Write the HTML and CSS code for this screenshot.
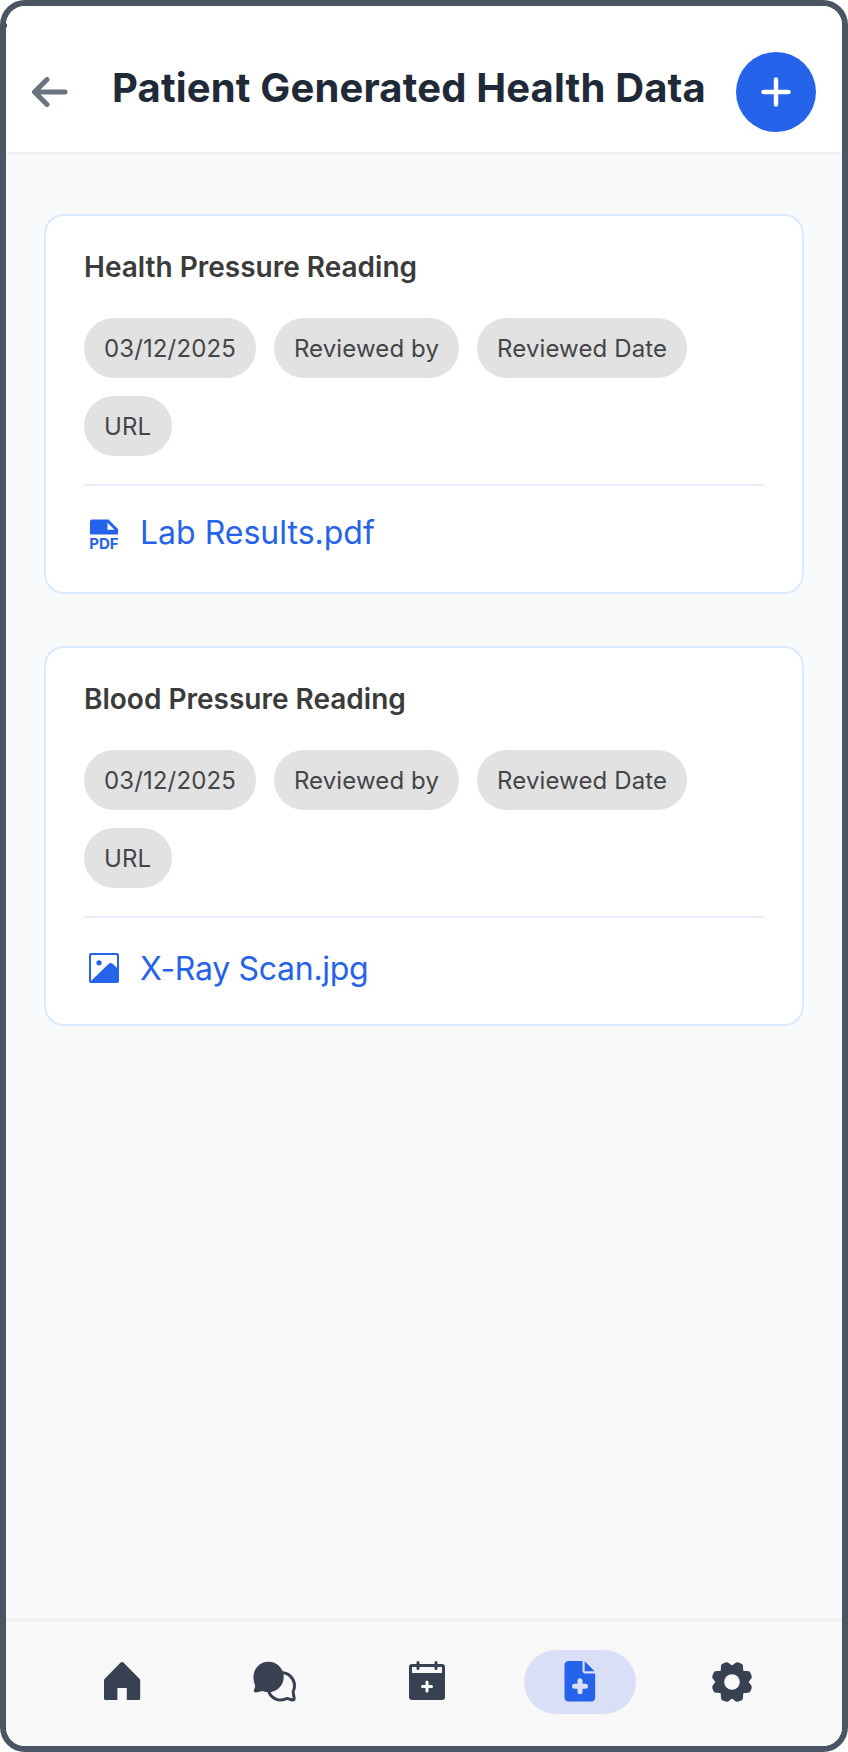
FILE: index.html
```html
<!DOCTYPE html>
<html lang="en">
<head>
    <meta charset="UTF-8">
    <meta name="viewport" content="width=device-width, initial-scale=1.0">
    <title>Patient Generated Health Data</title>
    <link rel="stylesheet" href="styles.css">
</head>
<body>
    <div class="phone">
        <header class="header">
            <button class="back-btn" aria-label="Back">
                <svg width="36" height="30" viewBox="0 0 36 30">
                    <path d="M33 15H3M15 2.5L2.5 15L15 27.5" />
                </svg>
            </button>
            <h1 class="page-title">Patient Generated Health Data</h1>
            <button class="add-btn" aria-label="Add">
                <svg width="30" height="30" viewBox="0 0 30 30">
                    <path d="M15 2.5V27.5M2.5 15H27.5" />
                </svg>
            </button>
        </header>

        <main class="content">
            <section class="card">
                <h2 class="card-title">Health Pressure Reading</h2>
                <div class="tags">
                    <span class="tag">03/12/2025</span>
                    <span class="tag">Reviewed by</span>
                    <span class="tag">Reviewed Date</span>
                    <span class="tag">URL</span>
                </div>
                <a class="file-link">
                    <svg class="file-icon" width="40" height="40" viewBox="0 0 40 40">
                        <path fill-rule="evenodd" d="M8 5.5H24.5L34 15V20.5H6V7.5Q6 5.5 8 5.5ZM23.5 8.8V15.8H30.5Z" />
                        <text class="pdf-label" x="5.2" y="35.4" textLength="29.5" lengthAdjust="spacingAndGlyphs">PDF</text>
                    </svg>
                    <span class="file-name">Lab Results.pdf</span>
                </a>
            </section>

            <section class="card">
                <h2 class="card-title">Blood Pressure Reading</h2>
                <div class="tags">
                    <span class="tag">03/12/2025</span>
                    <span class="tag">Reviewed by</span>
                    <span class="tag">Reviewed Date</span>
                    <span class="tag">URL</span>
                </div>
                <a class="file-link image-link">
                    <svg class="file-icon" width="40" height="40" viewBox="0 0 40 40">
                        <path fill-rule="evenodd" d="M7 5H33Q35 5 35 7V33Q35 35 33 35H7Q5 35 5 33V7Q5 5 7 5ZM7 7V33L24.5 16Q26.7 14.2 29 16L33 20V7Z" />
                        <circle cx="15" cy="14.8" r="2.6" />
                    </svg>
                    <span class="file-name">X-Ray Scan.jpg</span>
                </a>
            </section>
        </main>

        <nav class="bottom-nav">
            <a class="nav-item" aria-label="Home">
                <svg width="48" height="48" viewBox="0 0 48 48">
                    <path d="M22.6 4.6Q24 3.4 25.4 4.6L41.2 20.4Q42.2 21.4 42.2 22.6V40.5Q42.2 42 40.7 42H28.8V30H19.4V42H7.5Q6 42 6 40.5V22.6Q6 21.4 7 20.4Z" />
                </svg>
            </a>
            <a class="nav-item" aria-label="Messages">
                <svg width="48" height="48" viewBox="0 0 48 48">
                    <circle cx="17.5" cy="19" r="15.2" />
                    <path d="M3 23L4.2 28.5L2.8 32.5Q2.6 34.8 5 34.6L12 33L20 28Z" />
                    <path class="bubble-line" d="M32.2 14.7C40 15.6 45.2 24 42.9 31.5Q41.6 33.5 42.3 35.2L43.2 40.2Q43.4 42.4 41.2 42L37 40.6Q35.6 40 34 41.2C28.2 43.4 20.8 41 17.9 34.2" />
                </svg>
            </a>
            <a class="nav-item" aria-label="Appointments">
                <svg width="48" height="48" viewBox="0 0 48 48">
                    <path fill-rule="evenodd" d="M9 6H39Q42 6 42 9V39Q42 42 39 42H9Q6 42 6 39V9Q6 6 9 6ZM9 9V15H39V9Z" />
                    <path class="ring" d="M15 4.5V10.5M33 4.5V10.5" />
                    <path class="nav-plus" d="M24 24V33M19.5 28.5H28.5" />
                </svg>
            </a>
            <a class="nav-item active" aria-label="Health data">
                <svg width="48" height="48" viewBox="0 0 48 48">
                    <path d="M13 3H26.5V12.5Q26.5 15.6 29.6 15.6H39.2V39Q39.2 43.5 34.7 43.5H13Q8.5 43.5 8.5 39V7.5Q8.5 3 13 3Z" />
                    <path d="M28.7 3.3L38.6 13.3H28.7Z" />
                    <path class="doc-plus" d="M24 22.7V33.7M18.5 28.2H29.5" />
                </svg>
            </a>
            <a class="nav-item" aria-label="Settings">
                <svg width="48" height="48" viewBox="-24 -24 48 48">
                    <defs>
                        <path id="petal" d="M-0.2 0.2V-16.5C2 -18 3.5 -19.6 5 -19.8C7 -19.6 9 -18.7 10.6 -17.4C11.3 -15 11 -13 11.3 -11.3C13 -11 15 -11.3 17.4 -10.6C18.7 -9 19.6 -7 19.8 -5C19.6 -3.5 18 -2 16.5 0.2Z" />
                    </defs>
                    <use href="#petal" />
                    <use href="#petal" transform="rotate(90)" />
                    <use href="#petal" transform="rotate(180)" />
                    <use href="#petal" transform="rotate(270)" />
                    <circle class="gear-hole" r="7.8" />
                </svg>
            </a>
        </nav>
    </div>
</body>
</html>
```

FILE: styles.css
```css
* {
    box-sizing: border-box;
}

body {
    margin: 0;
    background: white;
    font-family: 'Inter', sans-serif;
}

.phone {
    position: relative;
    display: flex;
    flex-direction: column;
    width: 848px;
    height: 1752px;
    border: 6px solid #4b5563;
    border-radius: 25px;
    background: #f9fafc;
    overflow: hidden;
}

/* small button nub on the frame edge */
.phone::before {
    content: '';
    position: absolute;
    z-index: 2;
    left: -4px;
    top: 17px;
    width: 5px;
    height: 5px;
    border-radius: 50%;
    background: #1f2937;
}

.header {
    display: flex;
    align-items: center;
    height: 146px;
    padding: 26px 26px 0;
    background: white;
    box-shadow: 0 1px 4px rgba(0,0,0,0.08);
    z-index: 1;
}

.back-btn,
.add-btn {
    display: flex;
    align-items: center;
    justify-content: center;
    border: none;
    padding: 0;
    background: none;
}

.back-btn svg {
    fill: none;
    stroke: #6b7280;
    stroke-width: 5;
    stroke-linecap: round;
    stroke-linejoin: round;
}

.page-title {
    flex: 1;
    margin: -8px 0 0 44px;
    font-size: 40px;
    font-weight: 700;
    line-height: 56px;
    letter-spacing: 0.16px;
    color: #1f2937;
    white-space: nowrap;
}

.add-btn {
    width: 80px;
    height: 80px;
    border-radius: 50%;
    background: #2563eb;
}

.add-btn svg {
    fill: none;
    stroke: white;
    stroke-width: 4.4;
    stroke-linecap: round;
}

.content {
    display: flex;
    flex-direction: column;
    flex: 1;
    gap: 52px;
    padding: 62px 38px;
}

.card {
    height: 380px;
    padding: 31px 38px;
    border: 2px solid #dbeafe;
    border-radius: 20px;
    background: white;
}

.card-title {
    margin: 0 0 31px;
    font-size: 28px;
    font-weight: 600;
    line-height: 40px;
    color: #3b3b3b;
}

.tags {
    display: flex;
    flex-wrap: wrap;
    gap: 18px;
    padding-bottom: 28px;
    border-bottom: 2px solid #f3e8ff;
}

.tag {
    min-width: 88px;
    height: 60px;
    padding: 0 20px;
    border-radius: 30px;
    background: #e2e2e2;
    color: #444548;
    font-size: 24px;
    line-height: 61px;
    letter-spacing: 0.12px;
}

.file-link {
    display: flex;
    align-items: center;
    gap: 16px;
    margin-top: 28px;
    color: #2563eb;
}

.image-link {
    margin-top: 29px;
}

.file-icon {
    fill: #2563eb;
}

.pdf-label {
    font-size: 15px;
    font-weight: 700;
}

.file-name {
    margin-top: -2px;
    font-size: 32px;
    line-height: 40px;
}

.image-link .file-name {
    margin-top: 2px;
    letter-spacing: -0.3px;
}

.bottom-nav {
    display: flex;
    align-items: center;
    justify-content: space-around;
    height: 128px;
    padding: 0 33.8px 4px 40px;
    border-top: 4px solid #f2f2f2;
    background: #f8f8f8;
}

.nav-item {
    display: flex;
    justify-content: center;
    align-items: center;
    width: 112px;
    height: 64px;
    fill: #374151;
}

.nav-item.active {
    border-radius: 32px;
    background: #d9dff7;
    fill: #2563eb;
}

.bubble-line,
.ring,
.nav-plus,
.doc-plus {
    fill: none;
    stroke: #374151;
    stroke-width: 3;
    stroke-linecap: round;
    stroke-linejoin: round;
}

.nav-plus {
    stroke: white;
}

.doc-plus {
    stroke: #d9dff7;
    stroke-width: 5;
}

.gear-hole {
    fill: #f8f8f8;
}
```
